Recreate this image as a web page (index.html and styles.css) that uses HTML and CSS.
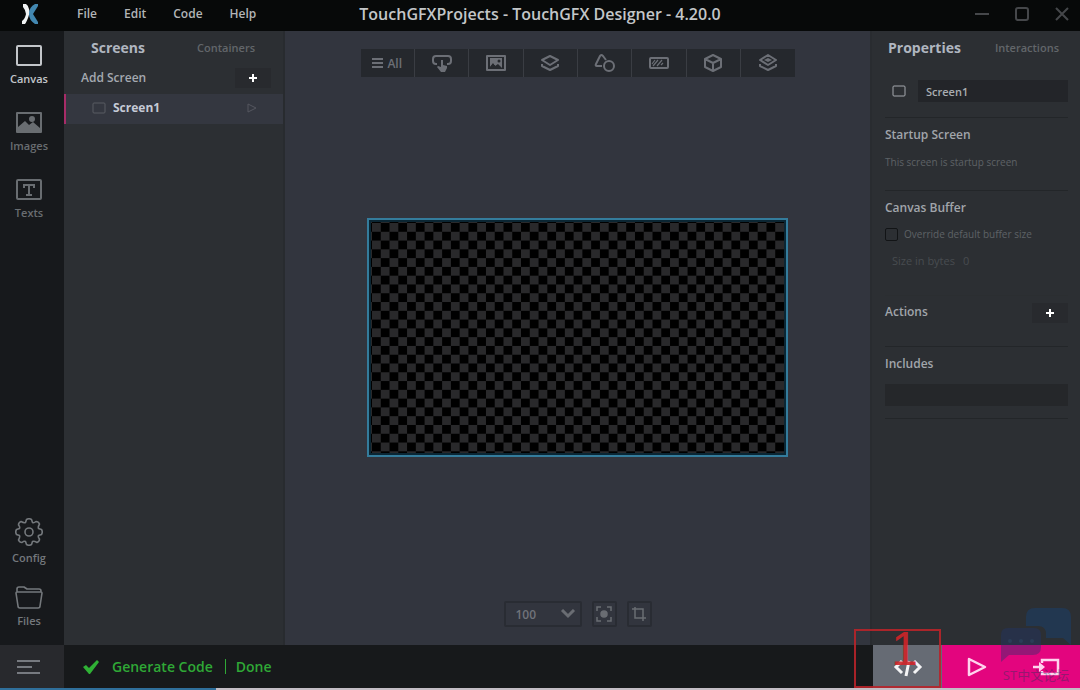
FILE: index.html
```html
<!DOCTYPE html>
<html lang="en">
<head>
<meta charset="utf-8">
<title>TouchGFXProjects - TouchGFX Designer - 4.20.0</title>
<link rel="stylesheet" href="styles.css">
</head>
<body>
<div class="app">
  <header class="titlebar">
    <div class="logo">
      <svg width="18" height="22" viewBox="0 0 18 22"><path d="M2 1h3q2 1 3 5l1 4q-1 1-2 5-2 5-3 6H1v-3q3-2 4-7-1-5-3-7z" fill="#f0f3f4"/><path d="M17 1v2l-5 8 5 8v2h-3q-6-4-6-10Q8 4 14 1z" fill="#4287b0"/></svg>
    </div>
    <nav class="menu">
      <button>File</button><button>Edit</button><button>Code</button><button>Help</button>
    </nav>
    <h1 class="title">TouchGFXProjects - TouchGFX Designer - 4.20.0</h1>
    <div class="window-controls">
      <button aria-label="Minimize"><svg width="16" height="16" viewBox="0 0 16 16"><path d="M1 8h14"/></svg></button>
      <button aria-label="Maximize"><svg width="16" height="16" viewBox="0 0 16 16"><rect x="2" y="2" width="12" height="12" rx="2"/></svg></button>
      <button aria-label="Close"><svg width="16" height="16" viewBox="0 0 16 16"><path d="M2 2l12 12M14 2L2 14"/></svg></button>
    </div>
  </header>

  <div class="workspace">
    <nav class="rail">
      <button class="rail-item active"><svg width="28" height="24" viewBox="0 0 28 24"><rect x="2" y="3" width="24" height="19" rx="1" fill="none" stroke="currentColor" stroke-width="2"/></svg>Canvas</button>
      <button class="rail-item"><svg width="28" height="24" viewBox="0 0 28 24"><path fill="currentColor" fill-rule="evenodd" d="M2 2h24q1 0 1 1v19q0 1-1 1H2q-1 0-1-1V3q0-1 1-1zm1 2v13l7-6 4 4 4-3 7 6V4zm14 2a3 3 0 1 1 0 6 3 3 0 0 1 0-6z"/></svg>Images</button>
      <button class="rail-item"><svg width="28" height="24" viewBox="0 0 28 24"><rect x="2" y="3" width="24" height="19" rx="1" fill="none" stroke="currentColor" stroke-width="2"/><path d="M9 11V8h10v3M14 8v10M11 18h6" fill="none" stroke="currentColor" stroke-width="2"/></svg>Texts</button>
      <div class="rail-spacer"></div>
      <button class="rail-item low config"><svg width="28" height="28" viewBox="-14 -14 28 28" fill="none" stroke="currentColor" stroke-width="1.600" stroke-linejoin="round"><path d="M-2.500-12.500Q0-14 2.500-12.500L3.500-9.500Q5-8.800 7-10.500 9.500-10.500 10.500-8 8.800-5 9.500-3.500L12.500-2.500Q14 0 12.500 2.500L9.500 3.500Q8.800 5 10.500 7 10.500 9.500 8 10.500 5 8.800 3.500 9.500L2.500 12.500Q0 14-2.500 12.500L-3.500 9.500Q-5 8.800-7 10.500-9.500 10.500-10.500 8-8.800 5-9.500 3.500L-12.500 2.500Q-14 0-12.500-2.500L-9.500-3.500Q-8.800-5-10.500-7-10.500-9.500-8-10.500-5-8.800-3.500-9.500z"/><circle r="4"/></svg>Config</button>
      <button class="rail-item low"><svg width="28" height="24" viewBox="0 0 28 24" fill="none" stroke="currentColor" stroke-width="1.600" stroke-linejoin="round"><path d="M1 8q0-1 1-1h24q1 0 1 1l-2 13q0 2-2 2H5q-2 0-2-2zM2 7V4q0-2 2-2h5l3 2h12q2 0 2 2v1"/></svg>Files</button>
    </nav>

    <aside class="screens">
      <div class="tabs screens-tabs"><button class="tab on">Screens</button><button class="tab">Containers</button></div>
      <div class="add-row"><span>Add Screen</span><button class="plus" aria-label="Add screen"><svg width="10" height="10" viewBox="0 0 10 10"><path d="M5 1v8M1 5h8"/></svg></button></div>
      <button class="screen-row">
        <svg width="14" height="12" viewBox="0 0 14 12" fill="none" stroke="#595d63"><rect x="1" y="1" width="12" height="10" rx="1"/></svg>
        <span>Screen1</span>
        <svg class="run" width="12" height="12" viewBox="0 0 12 12" fill="none" stroke="#54575f" stroke-linejoin="round"><path d="M2 2l8 4-8 4z"/></svg>
      </button>
    </aside>

    <main class="stage">
      <div class="tools">
        <button><svg width="11" height="12" viewBox="0 0 11 12"><path d="M0 2h11M0 6h11M0 10h11"/></svg>All</button>
        <button aria-label="Buttons"><svg width="20" height="18" viewBox="0 0 20 18"><path d="M5 10H4q-3 0-3-3V5q0-3 3-3h12q3 0 3 3v2q0 3-3 3h-1"/><path d="M9 6h2v5l4 1v2l-2 4h-4l-4-5 1-1 3 1z" fill="currentColor" stroke="none"/></svg></button>
        <button aria-label="Images"><svg width="20" height="18" viewBox="0 0 20 18"><rect x="1" y="2" width="18" height="14"/><path d="M4 4h12v10l-4-4-3 2-2-3-3 4z" fill="currentColor" stroke="none"/><circle cx="13" cy="7" r="1.500" fill="#25282d" stroke="none"/><path d="M4 14l3-4 3 3 2-2 3 3" stroke="#25282d" stroke-width="1"/></svg></button>
        <button aria-label="Containers"><svg width="20" height="18" viewBox="0 0 20 18"><path d="M10 2l8 4-8 5-8-5zM2 10v2l8 4 8-4v-2"/></svg></button>
        <button aria-label="Shapes"><svg width="22" height="20" viewBox="0 0 22 20"><path d="M8 13H3q-2 0-1-2L6 3q1-2 3 0l3 4"/><circle cx="15" cy="13" r="5"/></svg></button>
        <button aria-label="Progress"><svg width="20" height="18" viewBox="0 0 20 18"><rect x="1" y="4" width="18" height="10" rx="1"/><path stroke-width="1.200" d="M3 10l3-4M4 12l5-6M8 12l5-6M12 11l2-2"/></svg></button>
        <button aria-label="3D"><svg width="20" height="20" viewBox="0 0 20 20"><path d="M10 2l8 4v8l-8 4-8-4V6zM2 6l8 4 8-4M10 10v8"/></svg></button>
        <button aria-label="Layers"><svg width="20" height="18" viewBox="0 0 20 18"><path d="M10 1l8 5-8 5-8-5zM2 10v2l8 4 8-4v-2"/><path d="M10 4l4 2-4 2-4-2z" fill="currentColor" stroke="none"/></svg></button>
      </div>
      <div class="canvas-wrap"><div class="canvas"></div></div>
      <div class="zoom">
        <div class="select-box">
          <select aria-label="Zoom level"><option>100</option></select>
          <svg class="chevron" width="16" height="10" viewBox="0 0 16 10"><path d="M2 1l6 6 6-6" fill="none" stroke="currentColor" stroke-width="3"/></svg>
        </div>
        <button aria-label="Fit"><svg width="16" height="16" viewBox="0 0 16 16" fill="none" stroke="currentColor" stroke-width="1.500"><path d="M1 5V1h4M11 1h4v4M15 11v4h-4M5 15H1v-4"/><circle cx="8" cy="8" r="3" fill="currentColor"/></svg></button>
        <button aria-label="Crop"><svg width="16" height="16" viewBox="0 0 16 16" fill="none" stroke="currentColor" stroke-width="1.500"><path d="M4 1v11h11M1 3h11v12"/></svg></button>
      </div>
    </main>

    <aside class="props">
      <div class="tabs props-tabs"><button class="tab on">Properties</button><button class="tab">Interactions</button></div>
      <div class="name-row">
        <svg width="14" height="12" viewBox="0 0 14 12" fill="none" stroke="#a5a9af"><rect x="1" y="1" width="12" height="10" rx="1"/></svg>
        <input aria-label="Screen name" value="Screen1">
      </div>
      <section class="block startup"><h2>Startup Screen</h2><p>This screen is startup screen</p></section>
      <section class="block buffer">
        <h2>Canvas Buffer</h2>
        <label class="check"><input type="checkbox">Override default buffer size</label>
        <p class="size"><span>Size in bytes</span><span>0</span></p>
      </section>
      <section class="block actions"><h2>Actions</h2><button class="plus" aria-label="Add action"><svg width="10" height="10" viewBox="0 0 10 10"><path d="M5 1v8M1 5h8"/></svg></button></section>
      <section class="block includes"><h2><label for="includes">Includes</label></h2><input id="includes"></section>
    </aside>
  </div>

  <footer class="status">
    <button class="burger" aria-label="Log"><svg width="24" height="16" viewBox="0 0 24 16"><path d="M0 2h23M0 8h15M0 14h23" stroke="#777a80" stroke-width="2"/></svg></button>
    <div class="message">
      <svg width="18" height="16" viewBox="0 0 18 16"><path d="M1 8l3-2 3 3 8-8 2 2-9 12H7z" fill="#2fb135"/></svg>
      <span>Generate Code</span><i class="bar"></i><span>Done</span>
    </div>
    <div class="run-buttons">
      <button class="code" aria-label="Generate code"><svg width="30" height="20" viewBox="0 0 30 20" fill="none" stroke="#f4f4f5" stroke-width="3"><path d="M9 4L3 10l6 6M21 4l6 6-6 6M16 4l-3 15"/></svg></button>
      <button class="pink" aria-label="Run simulator"><svg width="22" height="22" viewBox="0 0 22 22" fill="none" stroke="#ffd3ee" stroke-width="2.500" stroke-linejoin="round"><path d="M3 3l16 8-16 8z"/></svg></button>
      <button class="pink" aria-label="Run target"><svg width="28" height="20" viewBox="0 0 28 20" fill="none" stroke="#ffd3ee" stroke-width="2.500"><path d="M10 6V3h16v14H10v-3M1 10h9"/><path d="M7 5l6 5-6 5z" fill="#ffd3ee" stroke="none"/></svg></button>
    </div>
    <div class="mark">1</div>
    <div class="watermark">
      <svg width="72" height="56" viewBox="0 0 72 56"><path d="M35 1h27q9 0 9 9v28l-8-7H46V27q0-8-8-8H26v-9q0-9 9-9z" fill="#15457c"/><path d="M8 21h26q7 0 7 7v12q0 8-8 8H9l-8 7V28q0-7 7-7z" fill="#22346c"/><g fill="#28528d"><circle cx="10" cy="34" r="2"/><circle cx="21" cy="34" r="2"/><circle cx="32" cy="34" r="2"/></g></svg>
      <span>ST中文论坛</span>
    </div>
  </footer>
  <div class="strip"><i></i></div>
</div>
</body>
</html>
```
FILE: styles.css
```css
* { box-sizing: border-box; }
body { margin: 0; font-family: "Open Sans", "Noto Sans CJK SC", sans-serif; font-weight: 600; color: #a9adb4; }
button { font: inherit; color: inherit; background: none; border: 0; padding: 0; display: flex; align-items: center; justify-content: center; }
svg { display: block; flex: none; }
h1, h2, p { margin: 0; }

.app { height: 100vh; display: grid; grid-template-rows: 31px 1fr 43px 2px; background: #2c2f33; overflow: hidden; }

.titlebar { position: relative; display: flex; align-items: center; background: #070909; padding-bottom: 4px; }
.logo { width: 64px; padding-left: 21px; }
.menu { display: flex; gap: 27px; padding-left: 13px; font-size: 12px; line-height: 16px; color: #b2b5b7; }
.title { position: absolute; left: 0; right: 0; margin: 0 auto; width: max-content; font-size: 16px; line-height: 20px; font-weight: 600; color: #c3c6c8; }
.window-controls { margin-left: auto; display: flex; gap: 24px; padding-right: 10px; }
.window-controls svg { fill: none; stroke: #45474a; stroke-width: 2; }

.workspace { display: grid; grid-template-columns: 64px 221px 1fr 210px; min-height: 0; }

.rail { background: #17191c; display: flex; flex-direction: column; padding: 12px 0 17px; gap: 24px; }
.rail-item { flex-direction: column; gap: 4px; font-size: 11px; line-height: 15px; color: #696d71; padding-right: 6px; }
.rail-item.active { color: #c3c6ca; }
.rail-spacer { flex: 1; }
.rail-item.low { color: #74787c; }
.rail-item.config { margin-bottom: -4px; }

.tabs { display: flex; align-items: center; justify-content: space-between; }
.tab { font-size: 11px; line-height: 20px; color: #62666a; }
.tab.on { font-size: 14px; font-weight: 700; color: #b0b6c0; }
.screens { background: #2c2f33; border-right: 2px solid #282b2f; }
.screens-tabs { padding: 7px 28px 0 27px; }
.add-row { display: flex; align-items: center; justify-content: space-between; padding: 10px 12px 6px 17px; font-size: 12px; line-height: 20px; color: #a4a9b0; }
.plus { width: 36px; height: 20px; background: #282a2e; }
.plus svg { fill: none; stroke: #fff; stroke-width: 2; }
.screen-row { width: 100%; height: 30px; background: #343740; border-left: 2px solid #a72c68; justify-content: flex-start; padding: 0 25px 3px 26px; gap: 7px; font-size: 12px; font-weight: 700; color: #c5cad6; }
.run { margin-left: auto; }

.stage { background: #32353e; display: grid; grid-template-rows: auto 1fr auto; justify-items: center; padding: 18px 0 18px; min-width: 0; }
.tools { display: grid; grid-template-columns: repeat(8, 1fr); gap: 1px; width: 434px; max-width: 100%; background: #3a3d43; }
.tools button { height: 28px; background: #25282d; font-size: 12px; color: #6c6f76; gap: 4px; }
.tools svg { fill: none; stroke: currentColor; stroke-width: 2; stroke-linejoin: round; }
.canvas-wrap { width: 100%; display: flex; align-items: center; justify-content: center; padding-bottom: 3px; }
.canvas { width: 72%; aspect-ratio: 423 / 240; background: conic-gradient(#000 25%, #29292b 0 50%, #000 0 75%, #29292b 0) 5px 5px / calc(100% / 24) calc(100% / 13.6); box-shadow: inset 0 0 0 2px #347c9c, inset 0 0 0 4px #0b2633; }
.zoom { display: flex; gap: 10px; color: #6a6d73; }
.zoom button { width: 25px; height: 26px; border: 2px solid #292c33; border-radius: 2px; }
.select-box { position: relative; width: 78px; height: 26px; }
.select-box select { width: 100%; height: 100%; appearance: none; background: none; border: 2px solid #292c33; border-radius: 2px; padding: 0 10px; font: 600 12px "Open Sans", sans-serif; color: #70737a; }
.chevron { position: absolute; right: 6px; top: 8px; }

.props { background: #2c2f33; border-left: 2px solid #292c30; padding: 7px 12px 0 13px; }
.props-tabs { padding: 0 9px 0 3px; }
.name-row { display: flex; align-items: center; gap: 12px; padding: 22px 0 15px 7px; }
.name-row input { flex: 1; min-width: 0; height: 22px; background: #232529; border: 0; padding: 0 8px; font: 600 11px "Open Sans", sans-serif; color: #a9adb1; }
.block { border-top: 1px solid #232629; padding-top: 8px; font-size: 10px; font-weight: 500; line-height: 16px; color: #5e6266; }
.block h2 { font-size: 12px; line-height: 18px; font-weight: 600; color: #a1a5ab; }
.startup { height: 73px; }
.startup p { margin-top: 10px; }
.buffer { height: 105px; }
.check { display: flex; align-items: center; gap: 6px; margin-top: 9px; }
.check input { appearance: none; width: 13px; height: 13px; margin: 0; border: 1px solid #121416; border-radius: 2px; }
.size { display: flex; gap: 8px; margin-top: 11px; padding-left: 7px; font-size: 11px; color: #484c50; }
.actions { height: 51px; display: flex; align-items: flex-start; justify-content: space-between; border-top-color: #2b2e31; padding-top: 7px; }
.includes { border-bottom: 1px solid #232629; height: 73px; }
.includes input { display: block; width: 100%; height: 22px; margin-top: 11px; background: #25272a; border: 0; color: #a9adb1; }

.status { position: relative; display: flex; background: #17191b; }
.burger { width: 64px; background: #28292d; padding-right: 6px; }
.message { display: flex; align-items: center; gap: 12px; padding-left: 18px; font-size: 14px; font-weight: 600; color: #2fa836; }
.bar { width: 1px; height: 15px; background: #2fa836; }
.message .bar { margin-right: -2px; }
.run-buttons { margin-left: auto; display: flex; }
.run-buttons button { width: 69px; }
.run-buttons .code { background: #666b74; }
.run-buttons .pink { background: #e3057e; }
.mark { position: absolute; right: 139px; bottom: 0; width: 87px; height: 59px; border: 2px solid #b8242a; color: #cf2529; font: 48px/36px "Liberation Sans", Arial, sans-serif; text-align: center; padding-left: 14px; opacity: .9; }
.watermark { position: absolute; right: 8px; bottom: 4px; width: 72px; opacity: .4; font-size: 13px; line-height: 18px; font-weight: 400; color: #25325c; text-align: center; white-space: nowrap; }
.watermark svg { margin-bottom: 3px; }
.strip { background: #c4bec5; }
.strip i { display: block; width: 20%; height: 100%; background: #2f6f9b; }
```
